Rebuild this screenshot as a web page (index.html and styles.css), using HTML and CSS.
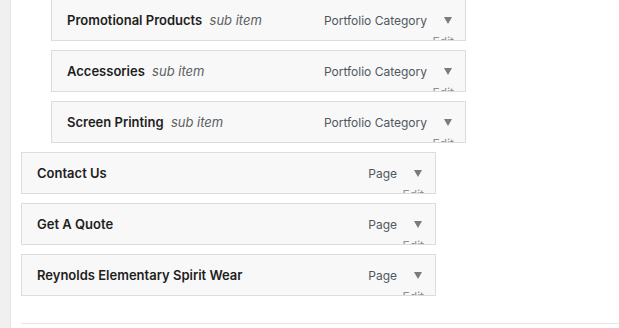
FILE: index.html
```html
<!DOCTYPE html>
<html lang="en">

<head>
    <meta charset="UTF-8">
    <title>Menu Structure</title>
    <link rel="stylesheet" href="styles.css">
</head>

<body>
    <div class="adminWrap">
        <div class="sideStrip"></div>
        <div class="menuArea">
            <ul class="menuList">
                <li class="menuItem depth1">
                    <span class="itemTitle">Promotional Products <em class="subLabel">sub item</em></span>
                    <span class="itemControls"><span class="itemType">Portfolio Category</span><span class="arrow"></span></span>
                    <span class="editLink">Edit</span>
                </li>
                <li class="menuItem depth1">
                    <span class="itemTitle">Accessories <em class="subLabel">sub item</em></span>
                    <span class="itemControls"><span class="itemType">Portfolio Category</span><span class="arrow"></span></span>
                    <span class="editLink">Edit</span>
                </li>
                <li class="menuItem depth1">
                    <span class="itemTitle">Screen Printing <em class="subLabel">sub item</em></span>
                    <span class="itemControls"><span class="itemType">Portfolio Category</span><span class="arrow"></span></span>
                    <span class="editLink">Edit</span>
                </li>
                <li class="menuItem">
                    <span class="itemTitle">Contact Us</span>
                    <span class="itemControls"><span class="itemType">Page</span><span class="arrow"></span></span>
                    <span class="editLink">Edit</span>
                </li>
                <li class="menuItem">
                    <span class="itemTitle">Get A Quote</span>
                    <span class="itemControls"><span class="itemType">Page</span><span class="arrow"></span></span>
                    <span class="editLink">Edit</span>
                </li>
                <li class="menuItem">
                    <span class="itemTitle">Reynolds Elementary Spirit Wear</span>
                    <span class="itemControls"><span class="itemType">Page</span><span class="arrow"></span></span>
                    <span class="editLink">Edit</span>
                </li>
            </ul>
            <div class="menuFooter"></div>
        </div>
    </div>
</body>

</html>
```

FILE: styles.css
```css
* {
    margin: 0;
    padding: 0;
    box-sizing: border-box;
}

body {
    background-color: #fff;
    font-family: Inter, "Noto Sans", sans-serif;
    font-size: 13px;
    color: #1d2327;
}

.adminWrap {
    display: flex;
    min-height: 328px;
}

.sideStrip {
    width: 11px;
    flex-shrink: 0;
    background-color: #f0f0f1;
    border-right: 1px solid #e6e6e7;
}

.menuArea {
    flex: 1;
    padding-left: 10px;
    margin-top: -1px;
}

.menuList {
    list-style: none;
    display: flex;
    flex-direction: column;
    gap: 9px;
}

.menuItem {
    position: relative;
    overflow: hidden;
    width: 415px;
    height: 42px;
    display: flex;
    align-items: center;
    justify-content: space-between;
    padding: 0 13px 0 15px;
    background-color: #f8f8f8;
    border: 1px solid #dcdcde;
}

.depth1 {
    margin-left: 30px;
}

.itemTitle {
    font-weight: 600;
    color: #1e1e1e;
}

.subLabel {
    font-weight: 400;
    color: #5c5f63;
    margin-left: 4px;
}

.itemControls {
    display: flex;
    align-items: center;
    color: #50575e;
    font-size: 12px;
}

.arrow {
    margin-left: 17px;
    width: 0;
    height: 0;
    border-left: 4.5px solid transparent;
    border-right: 4.5px solid transparent;
    border-top: 7px solid #787c82;
}

.editLink {
    position: absolute;
    right: 11px;
    bottom: -9px;
    font-size: 12px;
    color: #8c8f94;
}

.menuFooter {
    margin-top: 27px;
    border-top: 1px solid #e6e6e7;
}
```
